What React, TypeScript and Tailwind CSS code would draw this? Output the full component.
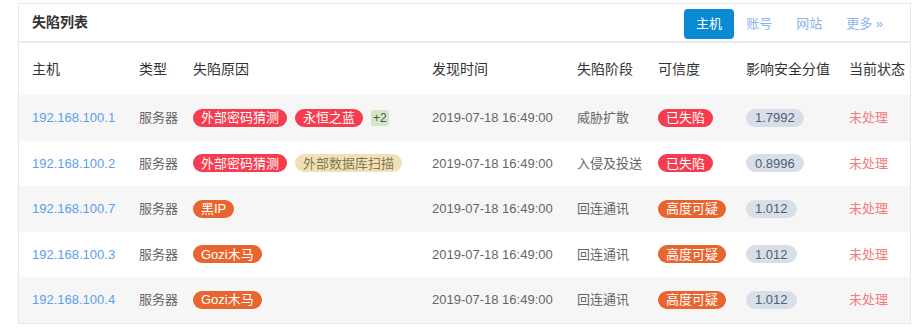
import React from "react";

type Tag = { text: string; tone: "red" | "orange" | "beige" | "more" };

type Row = {
    ip: string;
    type: string;
    reasons: Tag[];
    time: string;
    stage: string;
    trust: Tag;
    score: string;
    status: string;
};

const rows: Row[] = [
    {
        ip: "192.168.100.1",
        type: "服务器",
        reasons: [
            { text: "外部密码猜测", tone: "red" },
            { text: "永恒之蓝", tone: "red" },
            { text: "+2", tone: "more" },
        ],
        time: "2019-07-18 16:49:00",
        stage: "威胁扩散",
        trust: { text: "已失陷", tone: "red" },
        score: "1.7992",
        status: "未处理",
    },
    {
        ip: "192.168.100.2",
        type: "服务器",
        reasons: [
            { text: "外部密码猜测", tone: "red" },
            { text: "外部数据库扫描", tone: "beige" },
        ],
        time: "2019-07-18 16:49:00",
        stage: "入侵及投送",
        trust: { text: "已失陷", tone: "red" },
        score: "0.8996",
        status: "未处理",
    },
    {
        ip: "192.168.100.7",
        type: "服务器",
        reasons: [{ text: "黑IP", tone: "orange" }],
        time: "2019-07-18 16:49:00",
        stage: "回连通讯",
        trust: { text: "高度可疑", tone: "orange" },
        score: "1.012",
        status: "未处理",
    },
    {
        ip: "192.168.100.3",
        type: "服务器",
        reasons: [{ text: "Gozi木马", tone: "orange" }],
        time: "2019-07-18 16:49:00",
        stage: "回连通讯",
        trust: { text: "高度可疑", tone: "orange" },
        score: "1.012",
        status: "未处理",
    },
    {
        ip: "192.168.100.4",
        type: "服务器",
        reasons: [{ text: "Gozi木马", tone: "orange" }],
        time: "2019-07-18 16:49:00",
        stage: "回连通讯",
        trust: { text: "高度可疑", tone: "orange" },
        score: "1.012",
        status: "未处理",
    },
];

const headers = ["主机", "类型", "失陷原因", "发现时间", "失陷阶段", "可信度", "影响安全分值", "当前状态"];

const cols = "grid grid-cols-[107px_54px_239px_145px_81px_88px_103px_1fr] items-center px-[13px]";

function Pill({ tag }: { tag: Tag }) {
    if (tag.tone === "more") {
        return (
            <span className="inline-flex h-[16px] items-center rounded-[2px] bg-[#d3e6c8] px-[2px] text-[12px] leading-none text-[#4d5a44]">
                {tag.text}
            </span>
        );
    }
    const tone =
        tag.tone === "red"
            ? "bg-[#f63c4e] text-white"
            : tag.tone === "orange"
              ? "bg-[#e9652f] text-white"
              : "bg-[#efe2b9] text-[#86774f]";
    return (
        <span className={`inline-flex h-[18px] items-center rounded-full px-2 text-[13px] leading-none whitespace-nowrap ${tone}`}>
            {tag.text}
        </span>
    );
}

export default function App() {
    return (
        <div className="h-[328px] w-[916px] bg-white pt-[3px] pl-[18px] font-['Liberation_Sans','Noto_Sans_CJK_SC',sans-serif]">
            <section className="w-[893px] border border-[#e9e9e9] bg-white">
                <div className="flex h-[39px] items-center justify-between border-b-2 border-[#ebebeb] pl-[13px] pr-[15px]">
                    <h2 className="text-[14px] font-bold text-[#333]">失陷列表</h2>
                    <nav className="flex self-end mb-[2px] text-[13px]">
                        <span className="flex h-[30px] items-center rounded-[4px] bg-[#0a8ad2] px-3 text-white">主机</span>
                        <span className="flex h-[30px] items-center px-3 text-[#8cb4ee]">账号</span>
                        <span className="flex h-[30px] items-center px-3 text-[#8cb4ee]">网站</span>
                        <span className="flex h-[30px] items-center px-3 text-[#8cb4ee]">更多 »</span>
                    </nav>
                </div>

                <div className={`${cols} h-[52px] text-[14px] text-[#333]`}>
                    {headers.map((h) => (
                        <span key={h} className="whitespace-nowrap">{h}</span>
                    ))}
                </div>

                {rows.map((r, i) => (
                    <div
                        key={r.ip}
                        className={`${cols} h-[45.5px] text-[13px] text-[#666] ${i % 2 === 0 ? "bg-[#f6f6f6]" : "bg-white"}`}
                    >
                        <span className="text-[#5ba0ec]">{r.ip}</span>
                        <span>{r.type}</span>
                        <div className="flex items-center gap-2">
                            {r.reasons.map((t) => (
                                <Pill key={t.text} tag={t} />
                            ))}
                        </div>
                        <span className="whitespace-nowrap">{r.time}</span>
                        <span className="whitespace-nowrap">{r.stage}</span>
                        <div>
                            <Pill tag={r.trust} />
                        </div>
                        <div>
                            <span className="inline-flex h-[18px] items-center rounded-full bg-[#d9dfe8] px-[9px] text-[13px] leading-none text-[#4f5e76]">
                                {r.score}
                            </span>
                        </div>
                        <span className="text-[#f47c7c]">{r.status}</span>
                    </div>
                ))}
            </section>
        </div>
    );
}
